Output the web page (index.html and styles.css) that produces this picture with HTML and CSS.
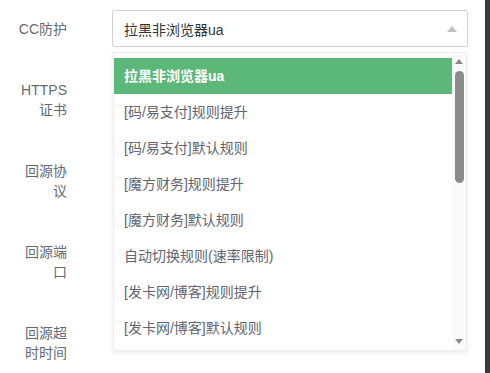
FILE: index.html
```html
<!doctype html>
<html lang="zh-CN">
  <head>
    <meta charset="UTF-8" />
    <meta name="viewport" content="width=device-width, initial-scale=1.0" />
    <title>站点设置</title>
    <link rel="stylesheet" href="styles.css">
  </head>
  <body>
    <div class="page">
      <div class="form">
        <div class="form-item">
          <label class="form-label">CC防护</label>
          <div class="form-control">
            <div class="select">
              <span class="select-value">拉黑非浏览器ua</span>
              <span class="select-arrow"></span>
            </div>
          </div>
        </div>
        <div class="form-item">
          <label class="form-label">HTTPS证书</label>
          <div class="form-control"></div>
        </div>
        <div class="form-item">
          <label class="form-label">回源协议</label>
          <div class="form-control"></div>
        </div>
        <div class="form-item">
          <label class="form-label">回源端口</label>
          <div class="form-control"></div>
        </div>
        <div class="form-item">
          <label class="form-label">回源超时时间</label>
          <div class="form-control"></div>
        </div>

        <!-- Dropdown for the CC select, opened -->
        <div class="dropdown">
          <ul class="dropdown-list">
            <li class="option selected">拉黑非浏览器ua</li>
            <li class="option">[码/易支付]规则提升</li>
            <li class="option">[码/易支付]默认规则</li>
            <li class="option">[魔方财务]规则提升</li>
            <li class="option">[魔方财务]默认规则</li>
            <li class="option">自动切换规则(速率限制)</li>
            <li class="option">[发卡网/博客]规则提升</li>
            <li class="option">[发卡网/博客]默认规则</li>
          </ul>
          <div class="scrollbar">
            <span class="scroll-up"></span>
            <span class="scroll-thumb"></span>
            <span class="scroll-down"></span>
          </div>
        </div>
      </div>
      <div class="edge"></div>
    </div>
  </body>
</html>
```

FILE: styles.css
```css
:root {
  --label-color: #666a75;
  --text-color: #333;
  --option-color: #62656f;
  --border-color: #d2d2d2;
  --primary-green: #5cb878;
  --edge-color: #3a3a3a;
}

* {
  box-sizing: border-box;
}

body {
  margin: 0;
  background: #fff;
  font-family: "Liberation Sans", "Noto Sans CJK SC", sans-serif;
  font-size: 14px;
  color: var(--text-color);
}

.page {
  display: flex;
  height: 100vh;
  overflow: hidden;
}

.form {
  position: relative;
  width: 485px;
  padding-top: 10px;
}

.edge {
  width: 5px;
  background: var(--edge-color);
}

/* Form rows */
.form-item {
  display: flex;
  align-items: flex-start;
  margin-bottom: 23px;
}

.form-label {
  width: 53px;
  margin-left: 14px;
  padding: 9px 0;
  line-height: 20px;
  text-align: right;
  color: var(--label-color);
}

.form-control {
  width: 356px;
  margin-left: 45px;
}

/* Select box */
.select {
  display: flex;
  align-items: center;
  justify-content: space-between;
  height: 37px;
  padding: 0 10px 0 11px;
  border: 1px solid var(--border-color);
  border-radius: 2px;
  background: #fff;
}

.select-value {
  color: var(--text-color);
}

.select-arrow {
  width: 0;
  height: 0;
  border-left: 5px solid transparent;
  border-right: 5px solid transparent;
  border-bottom: 6px solid #c2c2c2;
}

/* Dropdown */
.dropdown {
  position: absolute;
  top: 52px;
  left: 113px;
  width: 354px;
  height: 299px;
  display: flex;
  background: #fff;
  border: 1px solid #eee;
  box-shadow: 0 2px 4px rgba(0, 0, 0, 0.08);
}

.dropdown-list {
  flex: 1;
  margin: 0;
  padding: 5px 0 0;
  list-style: none;
  overflow: hidden;
}

.option {
  height: 36px;
  line-height: 36px;
  padding-left: 10px;
  color: var(--option-color);
  white-space: nowrap;
}

.option.selected {
  background: var(--primary-green);
  color: #fff;
  font-weight: bold;
}

/* Fake scrollbar */
.scrollbar {
  width: 14px;
  display: flex;
  flex-direction: column;
  align-items: center;
  padding: 6px 0 6px;
  background: #fafafa;
}

.scroll-up,
.scroll-down {
  width: 0;
  height: 0;
  border-left: 4px solid transparent;
  border-right: 4px solid transparent;
}

.scroll-up {
  border-bottom: 5px solid #8a8a8a;
}

.scroll-down {
  margin-top: auto;
  border-top: 5px solid #8a8a8a;
}

.scroll-thumb {
  width: 9px;
  height: 112px;
  margin-top: 7px;
  border-radius: 5px;
  background: #8c8c8c;
}
```
